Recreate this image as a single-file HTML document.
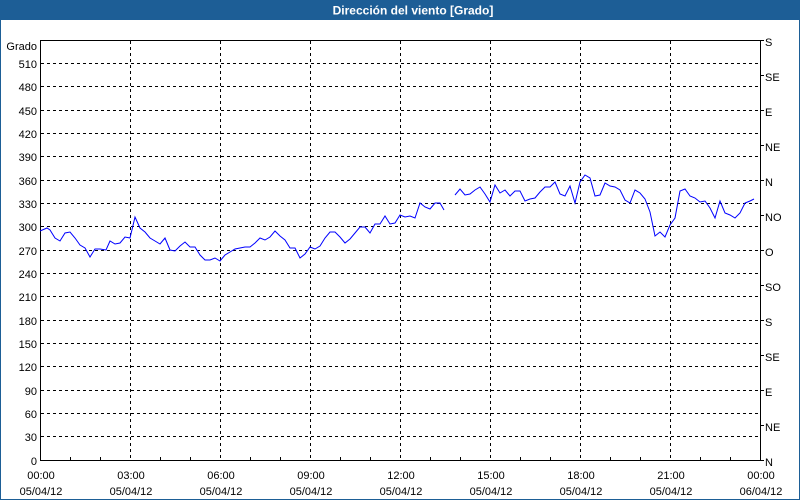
<!DOCTYPE html>
<html><head><meta charset="utf-8"><style>
html,body{margin:0;padding:0;background:#fff;}
svg{display:block;font-family:"Liberation Sans","DejaVu Sans",sans-serif;}
</style></head><body>
<svg width="800" height="500" xmlns="http://www.w3.org/2000/svg">
<rect x="0" y="0" width="800" height="500" fill="#fff"/>
<rect x="0" y="0" width="800" height="20" fill="#1d5e96"/>
<rect x="0" y="0" width="1" height="500" fill="#1d5e96"/>
<rect x="799" y="0" width="1" height="500" fill="#1d5e96"/>
<rect x="0" y="499" width="800" height="1" fill="#1d5e96"/>
<text x="413" y="14.5" fill="#fff" font-size="12" font-weight="bold" text-anchor="middle">Dirección del viento [Grado]</text>
<g stroke="#000" stroke-width="1" stroke-dasharray="3,3" shape-rendering="crispEdges">
<line x1="41" x2="760" y1="63.5" y2="63.5"/><line x1="41" x2="760" y1="86.5" y2="86.5"/><line x1="41" x2="760" y1="110.5" y2="110.5"/><line x1="41" x2="760" y1="133.5" y2="133.5"/><line x1="41" x2="760" y1="156.5" y2="156.5"/><line x1="41" x2="760" y1="180.5" y2="180.5"/><line x1="41" x2="760" y1="203.5" y2="203.5"/><line x1="41" x2="760" y1="226.5" y2="226.5"/><line x1="41" x2="760" y1="250.5" y2="250.5"/><line x1="41" x2="760" y1="273.5" y2="273.5"/><line x1="41" x2="760" y1="296.5" y2="296.5"/><line x1="41" x2="760" y1="320.5" y2="320.5"/><line x1="41" x2="760" y1="343.5" y2="343.5"/><line x1="41" x2="760" y1="366.5" y2="366.5"/><line x1="41" x2="760" y1="390.5" y2="390.5"/><line x1="41" x2="760" y1="413.5" y2="413.5"/><line x1="41" x2="760" y1="436.5" y2="436.5"/>
<line y1="41" y2="460" x1="130.5" x2="130.5"/><line y1="41" y2="460" x1="220.5" x2="220.5"/><line y1="41" y2="460" x1="310.5" x2="310.5"/><line y1="41" y2="460" x1="400.5" x2="400.5"/><line y1="41" y2="460" x1="490.5" x2="490.5"/><line y1="41" y2="460" x1="580.5" x2="580.5"/><line y1="41" y2="460" x1="670.5" x2="670.5"/>
</g>
<g stroke="#000" stroke-width="1" fill="none" shape-rendering="crispEdges">
<path d="M40.5 40V461M40 40.5H760M760.5 40V461M40 460.5H761"/>
<path d="M70.5 457V460M100.5 457V460M160.5 457V460M190.5 457V460M250.5 457V460M280.5 457V460M340.5 457V460M370.5 457V460M430.5 457V460M460.5 457V460M520.5 457V460M550.5 457V460M610.5 457V460M640.5 457V460M700.5 457V460M730.5 457V460"/>
<path d="M760 40.5h4M760 75.5h4M760 110.5h4M760 145.5h4M760 180.5h4M760 215.5h4M760 250.5h4M760 285.5h4M760 320.5h4M760 355.5h4M760 390.5h4M760 425.5h4M760 460.5h4"/>
</g>
<g font-size="11" fill="#000" text-anchor="end">
<text x="37" y="50">Grado</text>
<text x="37" y="68">510</text><text x="37" y="91">480</text><text x="37" y="115">450</text><text x="37" y="138">420</text><text x="37" y="161">390</text><text x="37" y="185">360</text><text x="37" y="208">330</text><text x="37" y="231">300</text><text x="37" y="255">270</text><text x="37" y="278">240</text><text x="37" y="301">210</text><text x="37" y="325">180</text><text x="37" y="348">150</text><text x="37" y="371">120</text><text x="37" y="395">90</text><text x="37" y="418">60</text><text x="37" y="441">30</text><text x="37" y="465">0</text>
</g>
<g font-size="11" fill="#000">
<text x="765" y="46">S</text><text x="765" y="81">SE</text><text x="765" y="116">E</text><text x="765" y="151">NE</text><text x="765" y="186">N</text><text x="765" y="221">NO</text><text x="765" y="256">O</text><text x="765" y="291">SO</text><text x="765" y="326">S</text><text x="765" y="361">SE</text><text x="765" y="396">E</text><text x="765" y="431">NE</text><text x="765" y="466">N</text>
</g>
<g font-size="11" fill="#000" text-anchor="middle">
<text x="41" y="479">00:00</text><text x="131" y="479">03:00</text><text x="221" y="479">06:00</text><text x="311" y="479">09:00</text><text x="401" y="479">12:00</text><text x="491" y="479">15:00</text><text x="581" y="479">18:00</text><text x="671" y="479">21:00</text><text x="761" y="479">00:00</text>
<text x="41" y="495">05/04/12</text><text x="131" y="495">05/04/12</text><text x="221" y="495">05/04/12</text><text x="311" y="495">05/04/12</text><text x="401" y="495">05/04/12</text><text x="491" y="495">05/04/12</text><text x="581" y="495">05/04/12</text><text x="671" y="495">05/04/12</text><text x="761" y="495">06/04/12</text>
</g>
<g fill="none" stroke="#0000ff" stroke-width="1">
<polyline points="40,231 47,228 50,230 55,238 60,241 65,233 70,232 75,238 80,245 85,248 90,257 95,249 100,249 106,250 110,241 115,244 120,243 125,237 130,238 135,217 140,228 145,232 150,238 155,241 160,244 165,238 170,250 175,251 180,246 185,242 190,247 195,247 200,255 205,260 210,260 215,258 220,261 225,255 230,252 235,249 240,248 245,247 250,247 255,243 260,238 265,240 270,237 275,231 280,236 285,240 290,248 295,248 300,258 305,254 310,247 315,249 320,246 325,238 330,232 335,232 340,237 345,243 350,239 355,233 360,227 365,227 370,233 375,224 380,224 385,216 390,224 395,223 400,215 405,217 410,216 415,218 420,203 425,207 430,209 435,203 440,203 444,210"/>
<polyline points="455,195 460,189 465,195 470,194 475,190 480,187 485,194 490,202 495,185 500,193 505,190 510,196 515,191 520,191 525,201 530,199 535,198 540,192 545,187 550,187 555,182 560,194 565,196 570,186 575,203 580,182 585,175 590,178 595,196 600,195 605,183 610,186 615,187 620,190 625,200 630,203 635,190 640,193 645,199 650,212 655,236 660,232 665,237 670,225 675,218 680,191 685,189 690,196 695,198 700,202 705,201 710,208 715,218 720,201 725,213 730,215 735,218 740,213 745,203 750,201 754,199"/>
</g>
</svg>
</body></html>
